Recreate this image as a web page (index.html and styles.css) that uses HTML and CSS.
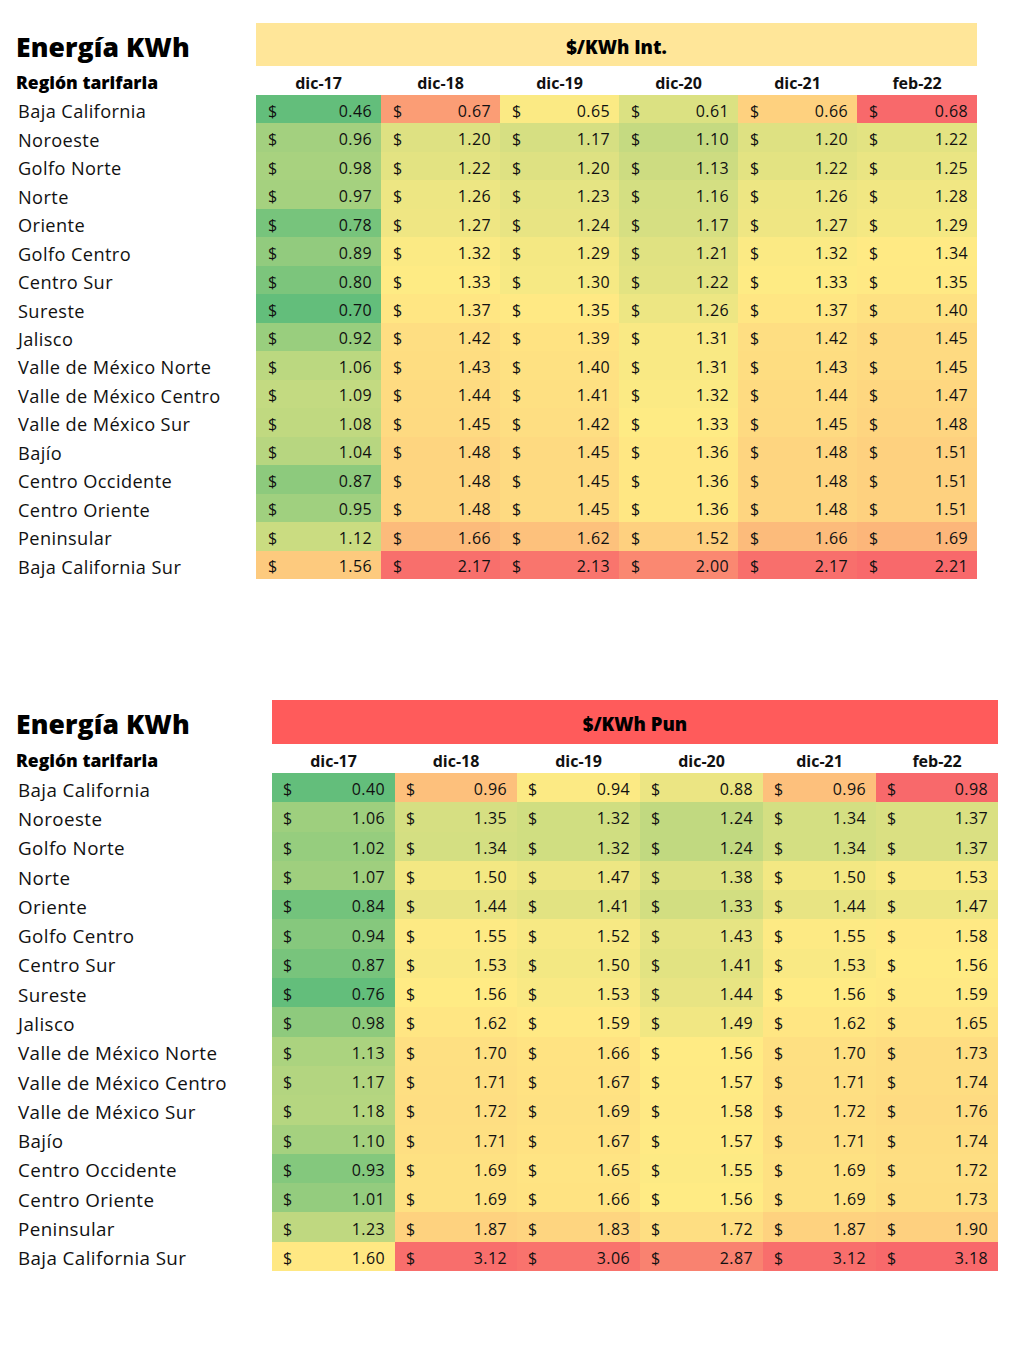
FILE: index.html
```html
<!DOCTYPE html>
<html lang="es">
<head>
<meta charset="utf-8">
<title>Energía KWh</title>
<link rel="stylesheet" href="styles.css">
</head>
<body>
<main class="page">
  <section class="sheet sheet--int" data-table="int">
    <div class="title">Energía KWh</div>
    <div class="band band--int">$/KWh Int.</div>
    <div class="sub">Región tarifaria</div>
    <div class="date">dic-17</div>
    <div class="date">dic-18</div>
    <div class="date">dic-19</div>
    <div class="date">dic-20</div>
    <div class="date">dic-21</div>
    <div class="date">feb-22</div>
  </section>
  <section class="sheet sheet--pun" data-table="pun">
    <div class="title">Energía KWh</div>
    <div class="band band--pun">$/KWh Pun</div>
    <div class="sub">Región tarifaria</div>
    <div class="date">dic-17</div>
    <div class="date">dic-18</div>
    <div class="date">dic-19</div>
    <div class="date">dic-20</div>
    <div class="date">dic-21</div>
    <div class="date">feb-22</div>
  </section>
</main>
<script src="app.js"></script>
</body>
</html>
```
FILE: styles.css
```css
* { box-sizing: border-box; }
body {
  margin: 0;
  background: #ffffff;
  color: #111111;
  font-family: "Open Sans", "Noto Sans", sans-serif;
}
.page {
  padding-top: 23px;
  display: flex;
  flex-direction: column;
  gap: 121px;
}
.sheet {
  display: grid;
}
.sheet--int {
  grid-template-columns: 256px 125px 119px 119px 119px 119px 120px;
  grid-template-rows: 43px 29px repeat(17, 28.47px);
}
.sheet--pun {
  grid-template-columns: 272px 123px 122px 123px 123px 113px 122px;
  grid-template-rows: 44px 29px repeat(17, 29.3px);
}
.title {
  padding-left: 16px;
  font-size: 26.5px;
  font-weight: 800;
  line-height: 1;
  display: flex;
  align-items: flex-end;
  padding-bottom: 6px;
  letter-spacing: 0.1px;
  color: #000;
}
.band {
  grid-column: 2 / span 6;
  display: flex;
  align-items: center;
  justify-content: center;
  padding-top: 3px;
  font-size: 18.5px;
  font-weight: 800;
  color: #000;
}
.band--int { background: #ffe699; }
.band--pun { background: #ff5b5b; }
.sub {
  padding-left: 16px;
  font-size: 17.5px;
  font-weight: 800;
  display: flex;
  align-items: flex-end;
  padding-bottom: 1px;
  color: #000;
}
.date {
  display: flex;
  align-items: flex-end;
  justify-content: center;
  padding-bottom: 1px;
  font-size: 16px;
  font-weight: 700;
  color: #111;
}
.region {
  padding-left: 18px;
  display: flex;
  align-items: center;
  padding-top: 4px;
  font-size: 18.2px;
  letter-spacing: 0.4px;
  color: #111;
  white-space: nowrap;
}
.sheet--pun .region { font-size: 18.8px; }
.cell {
  display: flex;
  align-items: center;
  justify-content: space-between;
  padding: 3px 9px 0 12px;
  font-size: 16px;
  letter-spacing: 0.4px;
  color: #111;
}
.sheet--pun .cell { padding: 3px 10px 0 11px; }
```
FILE: app.js
```js
(function () {
  var regions = [
    "Baja California", "Noroeste", "Golfo Norte", "Norte", "Oriente",
    "Golfo Centro", "Centro Sur", "Sureste", "Jalisco",
    "Valle de México Norte", "Valle de México Centro", "Valle de México Sur",
    "Bajío", "Centro Occidente", "Centro Oriente", "Peninsular",
    "Baja California Sur"
  ];
  var data = {
    int: [
      [0.46, 0.67, 0.65, 0.61, 0.66, 0.68],
      [0.96, 1.20, 1.17, 1.10, 1.20, 1.22],
      [0.98, 1.22, 1.20, 1.13, 1.22, 1.25],
      [0.97, 1.26, 1.23, 1.16, 1.26, 1.28],
      [0.78, 1.27, 1.24, 1.17, 1.27, 1.29],
      [0.89, 1.32, 1.29, 1.21, 1.32, 1.34],
      [0.80, 1.33, 1.30, 1.22, 1.33, 1.35],
      [0.70, 1.37, 1.35, 1.26, 1.37, 1.40],
      [0.92, 1.42, 1.39, 1.31, 1.42, 1.45],
      [1.06, 1.43, 1.40, 1.31, 1.43, 1.45],
      [1.09, 1.44, 1.41, 1.32, 1.44, 1.47],
      [1.08, 1.45, 1.42, 1.33, 1.45, 1.48],
      [1.04, 1.48, 1.45, 1.36, 1.48, 1.51],
      [0.87, 1.48, 1.45, 1.36, 1.48, 1.51],
      [0.95, 1.48, 1.45, 1.36, 1.48, 1.51],
      [1.12, 1.66, 1.62, 1.52, 1.66, 1.69],
      [1.56, 2.17, 2.13, 2.00, 2.17, 2.21]
    ],
    pun: [
      [0.40, 0.96, 0.94, 0.88, 0.96, 0.98],
      [1.06, 1.35, 1.32, 1.24, 1.34, 1.37],
      [1.02, 1.34, 1.32, 1.24, 1.34, 1.37],
      [1.07, 1.50, 1.47, 1.38, 1.50, 1.53],
      [0.84, 1.44, 1.41, 1.33, 1.44, 1.47],
      [0.94, 1.55, 1.52, 1.43, 1.55, 1.58],
      [0.87, 1.53, 1.50, 1.41, 1.53, 1.56],
      [0.76, 1.56, 1.53, 1.44, 1.56, 1.59],
      [0.98, 1.62, 1.59, 1.49, 1.62, 1.65],
      [1.13, 1.70, 1.66, 1.56, 1.70, 1.73],
      [1.17, 1.71, 1.67, 1.57, 1.71, 1.74],
      [1.18, 1.72, 1.69, 1.58, 1.72, 1.76],
      [1.10, 1.71, 1.67, 1.57, 1.71, 1.74],
      [0.93, 1.69, 1.65, 1.55, 1.69, 1.72],
      [1.01, 1.69, 1.66, 1.56, 1.69, 1.73],
      [1.23, 1.87, 1.83, 1.72, 1.87, 1.90],
      [1.60, 3.12, 3.06, 2.87, 3.12, 3.18]
    ]
  };

  var G = [99, 190, 123], Y = [255, 235, 132], R = [248, 105, 107];

  function stats(values) {
    var s = values.slice().sort(function (a, b) { return a - b; });
    var n = s.length;
    var mid = n % 2 ? s[(n - 1) / 2] : (s[n / 2 - 1] + s[n / 2]) / 2;
    return { min: s[0], mid: mid, max: s[n - 1] };
  }

  function colour(v, st) {
    var a, b, t;
    if (v <= st.mid) { a = G; b = Y; t = (v - st.min) / (st.mid - st.min || 1); }
    else { a = Y; b = R; t = (v - st.mid) / (st.max - st.mid || 1); }
    t = Math.max(0, Math.min(1, t));
    return "rgb(" + a.map(function (c, i) { return Math.round(c + (b[i] - c) * t); }).join(",") + ")";
  }

  document.querySelectorAll(".sheet").forEach(function (sheet) {
    var rows = data[sheet.getAttribute("data-table")];
    var firstStats = stats(rows[0]);
    var rest = [];
    rows.slice(1).forEach(function (r) { rest = rest.concat(r); });
    var restStats = stats(rest);

    rows.forEach(function (row, ri) {
      var label = document.createElement("div");
      label.className = "region";
      label.textContent = regions[ri];
      sheet.appendChild(label);
      var st = ri === 0 ? firstStats : restStats;
      row.forEach(function (v) {
        var cell = document.createElement("div");
        cell.className = "cell";
        cell.style.backgroundColor = colour(v, st);
        var cur = document.createElement("span");
        cur.textContent = "$";
        var num = document.createElement("span");
        num.textContent = v.toFixed(2);
        cell.appendChild(cur);
        cell.appendChild(num);
        sheet.appendChild(cell);
      });
    });
  });
})();
```
